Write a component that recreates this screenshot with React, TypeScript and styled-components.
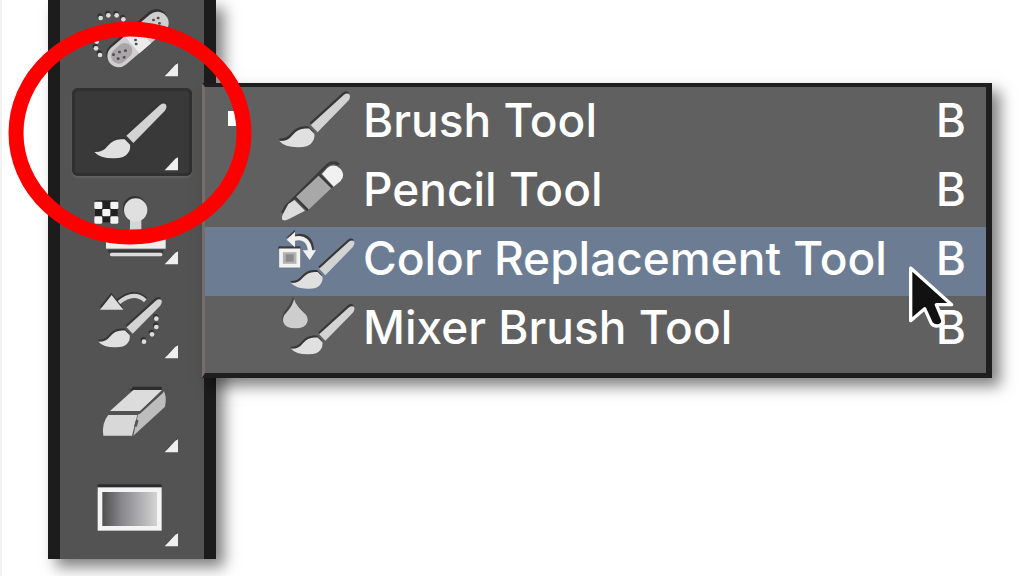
import React from "react";
import styled, { createGlobalStyle } from "styled-components";

const GlobalStyle = createGlobalStyle`
  * { box-sizing: border-box; }
  body { margin: 0; background: #fff; overflow-x: hidden; }
`;

const Page = styled.main`
  position: relative;
  display: flex;
  align-items: flex-start;
  min-height: 100vh;
  padding-left: 46px;
  border-left: 2px solid #f1f1f1;
  overflow: hidden;
  font-family: Inter, "Liberation Sans", sans-serif;
`;

const Toolbar = styled.nav`
  flex: none;
  width: 168px;
  overflow: hidden;
  background: #535353;
  border: solid #1c1c1c;
  border-width: 0 12px;
  box-shadow: 8px 8px 14px rgba(0, 0, 0, 0.5);
`;

const ToolList = styled.div`
  display: flex;
  flex-direction: column;
  align-items: center;
  gap: 6px;
  margin-top: -6px;
  padding: 0 12px 7px;
`;

const ToolButton = styled.button<{ $active?: boolean }>`
  display: block;
  width: 120px;
  height: 88px;
  padding: 0;
  border: 0;
  border-radius: 6px;
  background: ${(p) => (p.$active ? "#393939" : "transparent")};
  box-shadow: ${(p) =>
    p.$active ? "inset 0 0 0 3px #303030, 0 2px 2px #626262" : "none"};
`;

const ToolIcon = styled.svg`
  display: block;
  width: 120px;
  height: 88px;
`;

const Menu = styled.div`
  position: relative;
  flex: 1;
  min-width: 0;
  margin: 83px 32px 32px -14px;
  padding: 2px 0 8px;
  background: #606060;
  border-style: solid;
  border-width: 4px 6px 5px 3px;
  border-color: #1e1e1e #1e1e1e #1e1e1e #756d6b;
  box-shadow: 8px 8px 14px rgba(0, 0, 0, 0.5);
`;

const MenuRow = styled.button<{ $selected?: boolean }>`
  position: relative;
  display: grid;
  grid-template-columns: 70px 88px 1fr auto;
  align-items: center;
  width: 100%;
  height: 69px;
  padding: 0 20px 0 0;
  border: 0;
  background: ${(p) => (p.$selected ? "#6c7d93" : "transparent")};
  color: #fff;
  font-family: inherit;
  font-size: 46px;
  font-weight: 500;
  line-height: 62px;
  text-align: left;
  white-space: nowrap;
`;

const Marker = styled.span<{ $on?: boolean }>`
  align-self: start;
  width: 15px;
  height: 15px;
  margin: 22px 0 0 23px;
  background: ${(p) => (p.$on ? "#fff" : "transparent")};
`;

const RowIcon = styled.svg`
  display: block;
  width: 85px;
  height: 69px;
`;

const Label = styled.span`
  padding-bottom: 7px;
`;

const Pointer = styled.svg`
  position: absolute;
  z-index: 2;
  top: 37px;
  right: 28px;
  width: 50px;
  height: 68px;
`;

const Highlight = styled.svg`
  position: absolute;
  z-index: 3;
  top: 20px;
  left: 6px;
  width: 246px;
  height: 226px;
  pointer-events: none;
`;

const HANDLE = "M96 99 L197 7 Q208 -1 215 6 Q219 14 211 25 L117 121 Z";
const TUFT =
  "M0 148 Q26 149 40 130 Q56 111 80 110 L91 110 L107 126 Q110 141 98 155 Q88 167 60 167 Q18 168 0 148 Z";

function Brush({ x, y, scale = 1 }: { x: number; y: number; scale?: number }) {
  return (
    <g transform={`translate(${x} ${y}) scale(${scale})`}>
      <g fill="#363636" transform="translate(-3 -7)">
        <path d={HANDLE} />
        <path d={TUFT} />
      </g>
      <path d={HANDLE} fill="#d3d3d3" />
      <path d={TUFT} fill="#e0e0e0" />
    </g>
  );
}

function Dots({ points }: { points: number[][] }) {
  return (
    <>
      {points.map(([x, y]) => (
        <g key={`${x}-${y}`}>
          <circle cx={x - 2} cy={y - 6} r="8" fill="#333" />
          <circle cx={x} cy={y} r="7" fill="#ddd" />
        </g>
      ))}
    </>
  );
}

const HealingIcon = () => (
  <>
    <Dots
      points={[[86, 72], [109, 64], [134, 64], [154, 76], [74, 143], [72, 163], [84, 183]]}
    />
    <path d="M137 180 L253 79" stroke="#333" strokeWidth="68" strokeLinecap="round" />
    <path d="M140 186 L256 87" stroke="#cfcfcf" strokeWidth="68" strokeLinecap="round" />
    <path d="M140 186 L158 170" stroke="#aaa5a9" strokeWidth="46" strokeLinecap="round" />
    <path d="M180 152 L215 122" stroke="#ececec" strokeWidth="68" />
    <path
      d="M124 182h1M142 174h1M160 170h1M138 194h1M156 190h1M190 138h1M200 124h1M192 150h1M244 78h1M258 72h1M262 88h1"
      stroke="#505050"
      strokeWidth="8"
      strokeLinecap="round"
    />
  </>
);

const StampIcon = () => (
  <>
    <rect x="69" y="55" width="68" height="66" fill="#202020" />
    {[[67, 59], [115, 59], [91, 81], [67, 103], [115, 103]].map(([x, y]) => (
      <rect key={`${x}-${y}`} x={x} y={y} width="24" height="22" rx="4" fill="#f3f3f3" />
    ))}
    <circle cx="188" cy="77" r="35" fill="#333" />
    <path d="M174 108 H208 V140 L222 162 H160 L174 140 Z" fill="#d5d5d5" />
    <circle cx="191" cy="84" r="35" fill="#e0e0e0" />
    <rect x="102" y="160" width="179" height="40" fill="#eee" />
    <rect x="108" y="204" width="166" height="8" fill="#3a3a3a" />
    <rect x="114" y="212" width="157" height="11" rx="5" fill="#ddd" />
  </>
);

const HistoryIcon = () => (
  <>
    <path d="M136 76 Q184 36 222 70" fill="none" stroke="#333" strokeWidth="12" />
    <path d="M138 82 Q184 42 220 74" fill="none" stroke="#d5d5d5" strokeWidth="12" />
    <path d="M82 94 L118 50 L152 94Z" fill="#333" />
    <path d="M84 101 L119 57 L154 101Z" fill="#ddd" />
    <Brush x={79} y={67} scale={0.88} />
    <Dots points={[[253, 128], [253, 153], [240, 175], [216, 197]]} />
  </>
);

const EraserIcon = () => (
  <>
    <path d="M184 50 H270 L268 62 H172Z" fill="#2c2c2c" />
    <path d="M114 123 L184 60 H270 L205 123Z" fill="#dcdcdc" />
    <path d="M276 64 Q285 82 279 110 L184 197 L198 134Z" fill="#bdbdbd" />
    <path d="M109 135 H196 L180 197 H94 Q88 160 109 135Z" fill="#d8d8d8" />
    <path d="M112 129 H202 L272 65" fill="none" stroke="#505050" strokeWidth="6" />
    <path d="M196 150 L190 170" stroke="#555" strokeWidth="8" />
  </>
);

const GradientIcon = () => (
  <>
    <defs>
      <linearGradient id="ramp">
        <stop offset="0" stopColor="#484848" />
        <stop offset="0.35" stopColor="#85858a" />
        <stop offset="1" stopColor="#d8d8d8" />
      </linearGradient>
    </defs>
    <rect x="77" y="61" width="192" height="20" fill="#2c2c2c" />
    <rect x="84" y="77" width="178" height="116" fill="url(#ramp)" stroke="#f4f4f4" strokeWidth="14" />
  </>
);

const PencilIcon = () => (
  <>
    <path d="M22 165 L32 146 L136 42 L158 20 Q176 8 192 20" fill="none" stroke="#3a3a3a" strokeWidth="8" />
    <path d="M58 126 L90 158 L42 183 Q30 190 23 186 Q18 180 24 168 L40 138Z" fill="#dcdcdc" />
    <path d="M62 118 L134 50 L172 88 L99 157Z" fill="#a8a8a8" />
    <path d="M60 118 L99 157 M132 49 L172 89" stroke="#3a3a3a" strokeWidth="7" />
    <path d="M141 48 L157 30 Q177 14 197 33 Q213 53 196 70 L176 86Z" fill="#f1f1f1" />
  </>
);

const ReplaceIcon = () => (
  <>
    <path d="M10 66 V58 H76 V66" fill="#3a3a3a" />
    <rect x="18" y="70" width="52" height="46" fill="#b3b3b3" stroke="#f3f3f3" strokeWidth="11" />
    <rect x="32" y="82" width="24" height="22" fill="#8b8b8b" />
    <path d="M56 32 C90 16 110 38 111 68" fill="none" stroke="#3a3a3a" strokeWidth="12" />
    <path d="M54 37 C86 25 105 45 105 75" fill="none" stroke="#f1f1f1" strokeWidth="13" />
    <path d="M32 34 L60 8 V22" fill="#3a3a3a" />
    <path d="M35 38 L60 14 V61Z M83 70 H123 L104 99Z" fill="#f1f1f1" />
    <Brush x={48} y={38} scale={0.88} />
  </>
);

const MixerIcon = () => (
  <>
    <path d="M54 2 Q63 26 88 50 Q94 60 92 74 H22 Q20 55 32 42 Q50 18 54 2Z" fill="#444" />
    <path d="M57 9 Q65 32 90 53 Q101 65 97 78 Q91 97 62 97 Q30 97 25 78 Q21 62 34 50 Q54 28 57 9Z" fill="#cdcdcd" />
    <Brush x={48} y={28} scale={0.88} />
  </>
);

const tools = [
  { name: "Spot Healing Brush", icon: <HealingIcon /> },
  { name: "Brush", icon: <Brush x={67} y={44} />, active: true },
  { name: "Clone Stamp", icon: <StampIcon /> },
  { name: "History Brush", icon: <HistoryIcon /> },
  { name: "Eraser", icon: <EraserIcon /> },
  { name: "Gradient", icon: <GradientIcon /> },
];

const items = [
  { label: "Brush Tool", icon: <Brush x={13} y={11} scale={0.98} />, current: true },
  { label: "Pencil Tool", icon: <PencilIcon /> },
  { label: "Color Replacement Tool", icon: <ReplaceIcon />, selected: true },
  { label: "Mixer Brush Tool", icon: <MixerIcon /> },
];

export default function App() {
  return (
    <>
      <GlobalStyle />
      <Page>
        <Toolbar aria-label="Tools">
          <ToolList>
            {tools.map((tool) => (
              <ToolButton key={tool.name} type="button" aria-label={tool.name} $active={tool.active}>
                <ToolIcon viewBox="0 0 360 264" aria-hidden="true">
                  {tool.icon}
                  <path d="M282 240 L316 204 V240Z" fill="#3c3c3c" />
                  <path d="M278 247 L310 212 L318 208 V247Z" fill="#efefef" />
                </ToolIcon>
              </ToolButton>
            ))}
          </ToolList>
        </Toolbar>
        <Menu role="menu" aria-label="Brush tools">
          {items.map((item) => (
            <MenuRow key={item.label} type="button" role="menuitem" $selected={item.selected}>
              <Marker $on={item.current} />
              <RowIcon viewBox="0 0 255 207" aria-hidden="true">
                {item.icon}
              </RowIcon>
              <Label>{item.label}</Label>
              <Label>B</Label>
              {item.selected && (
                <Pointer viewBox="0 0 150 204" aria-hidden="true">
                  <path
                    d="M8 12 V170 L50 134 L70 178 Q80 190 96 184 Q108 178 104 168 L85 122 H131 Z"
                    fill="#111"
                    stroke="#fff"
                    strokeWidth="10"
                    strokeLinejoin="round"
                  />
                </Pointer>
              )}
            </MenuRow>
          ))}
        </Menu>
        <Highlight viewBox="0 0 246 226" aria-hidden="true">
          <ellipse cx="122" cy="113" rx="114" ry="104" fill="none" stroke="#f00" strokeWidth="15" />
        </Highlight>
      </Page>
    </>
  );
}
